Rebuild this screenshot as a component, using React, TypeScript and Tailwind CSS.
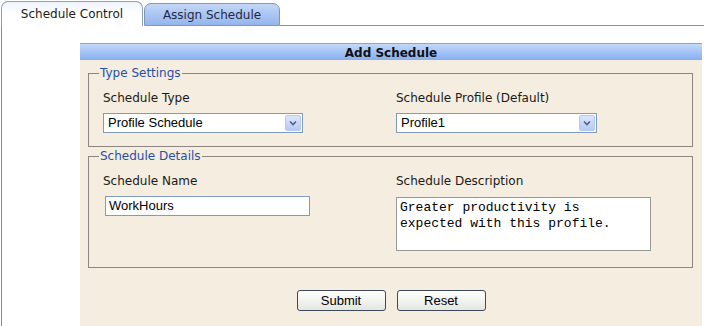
export default function App() {
  const ui = { fontFamily: '"DejaVu Sans", Verdana, sans-serif' };
  const arial = { fontFamily: '"Liberation Sans", Arial, sans-serif' };
  const mono = { fontFamily: '"Liberation Mono", "Courier New", monospace' };

  const Select = ({ value, width }: { value: string; width: string }) => (
    <div
      className={`${width} h-[20px] flex items-center bg-white border border-[#7f9db9] pl-[4px] pr-px text-[13px] text-black`}
      style={arial}
    >
      <span className="flex-1 leading-[18px]">{value}</span>
      <span className="w-[16px] h-[16px] flex items-center justify-center rounded-[2px] border border-[#b7c9ee] bg-gradient-to-b from-[#dce6fb] to-[#b5c9f5]">
        <svg width="8" height="6" viewBox="0 0 8 6">
          <path d="M1 1.5 L4 4.5 L7 1.5" fill="none" stroke="#4d6185" strokeWidth="1.6" />
        </svg>
      </span>
    </div>
  );

  return (
    <div className="w-[704px] h-[326px] bg-white overflow-hidden pl-px" style={ui}>
      <div className="flex items-end h-[26px]">
        <div className="w-[142px] h-[25px] rounded-t-[7px] border border-b-0 border-[#8aa0bd] bg-gradient-to-b from-[#eef3fb] via-white to-white flex items-center justify-center text-[12px] text-[#1a1a1a]">
          Schedule Control
        </div>
        <div className="ml-px w-[136px] h-[23px] rounded-t-[7px] border border-[#7f96b4] bg-gradient-to-b from-[#c3d6f7] to-[#94b5ec] flex items-center justify-center text-[12px] text-[#1e2a44]">
          Assign Schedule
        </div>
        <div className="flex-1 border-b border-[#7f93a8]" />
      </div>
      <div className="h-[300px] border-l border-[#6d91b0] pt-[17px] pl-[78px]">
        <div className="w-[622px] h-[300px] bg-[#f4ede0]">
          <div className="h-[17px] pt-[2px] border-t border-[#86a5d8] bg-gradient-to-b from-[#c4d8f9] to-[#86aef0] flex items-center justify-center text-[12px] font-bold text-[#111]">
            Add Schedule
          </div>
          <div className="pl-[8px]">
            <fieldset className="w-[605px] mt-[6px] border border-[#8b8680] px-[14px] pb-[13px]">
              <legend className="ml-[-4px] px-px text-[12px] leading-[14px] text-[#2a4fa6]">
                Type Settings
              </legend>
              <div className="grid grid-cols-[293px_1fr] pt-[10px] text-[12px] text-[#1a1a1a]">
                <div>
                  <div className="leading-[16px]">Schedule Type</div>
                  <div className="mt-[7px]">
                    <Select value="Profile Schedule" width="w-[200px]" />
                  </div>
                </div>
                <div>
                  <div className="leading-[16px]">Schedule Profile (Default)</div>
                  <div className="mt-[7px]">
                    <Select value="Profile1" width="w-[201px]" />
                  </div>
                </div>
              </div>
            </fieldset>
            <fieldset className="w-[605px] mt-[2px] border border-[#8b8680] px-[14px] pb-[16px]">
              <legend className="ml-[-4px] px-px text-[12px] leading-[14px] text-[#2a4fa6]">
                Schedule Details
              </legend>
              <div className="grid grid-cols-[293px_1fr] items-start pt-[10px] text-[12px] text-[#1a1a1a]">
                <div>
                  <div className="leading-[16px]">Schedule Name</div>
                  <div
                    className="mt-[7px] ml-[2px] w-[205px] h-[20px] bg-white border border-[#7f9db9] pl-[3px] text-[13px] leading-[18px] text-black"
                    style={arial}
                  >
                    WorkHours
                  </div>
                </div>
                <div>
                  <div className="leading-[16px]">Schedule Description</div>
                  <div
                    className="mt-[8px] w-[255px] h-[54px] bg-white border border-[#999999] pl-[3px] pt-[2px] text-[13px] leading-[16px] text-black"
                    style={mono}
                  >
                    Greater productivity is
                    <br />
                    expected with this profile.
                  </div>
                </div>
              </div>
            </fieldset>
          </div>
          <div className="flex justify-center gap-[11px] mt-[22px]" style={arial}>
            <button className="w-[89px] h-[21px] rounded-[3px] border border-[#3c4a5c] bg-gradient-to-b from-white to-[#e6e6e0] text-[13px] text-black">
              Submit
            </button>
            <button className="w-[89px] h-[21px] rounded-[3px] border border-[#3c4a5c] bg-gradient-to-b from-white to-[#e6e6e0] text-[13px] text-black">
              Reset
            </button>
          </div>
        </div>
      </div>
    </div>
  );
}
